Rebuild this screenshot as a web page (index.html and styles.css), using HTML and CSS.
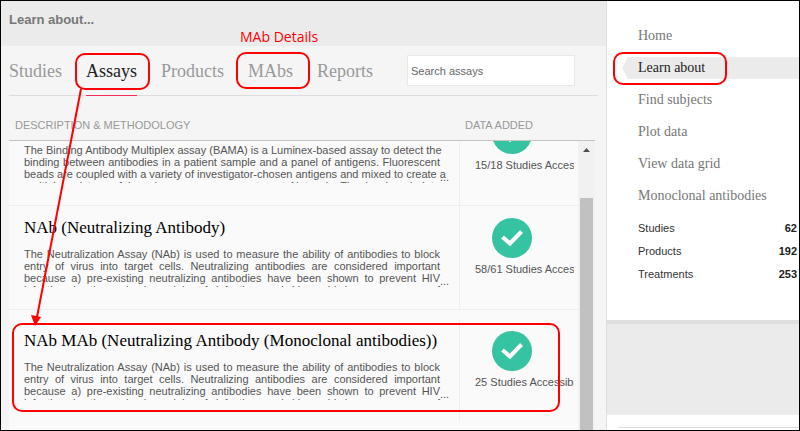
FILE: index.html
```html
<!DOCTYPE html>
<html lang="en">
<head>
    <meta charset="utf-8">
    <meta name="viewport" content="width=device-width, initial-scale=1">
    <title>Learn about - Assays</title>
    <link rel="stylesheet" href="styles.css">
</head>
<body>
    <div class="page">
        <main class="main">
            <header class="header">
                <h1>Learn about...</h1>
            </header>
            <div class="tabbar">
                <nav class="tabs">
                    <a href="#studies">Studies</a>
                    <a href="#assays" class="active">Assays</a>
                    <a href="#products">Products</a>
                    <a href="#mabs">MAbs</a>
                    <a href="#reports">Reports</a>
                </nav>
                <input class="search" type="text" placeholder="Search assays" aria-label="Search assays">
            </div>
            <div class="listing">
                <table class="assays">
                    <thead>
                        <tr>
                            <th>DESCRIPTION &amp; METHODOLOGY</th>
                            <th>DATA ADDED</th>
                        </tr>
                    </thead>
                    <tbody>
                        <tr class="scrolled">
                            <td class="info">
                                <div class="desc">
                                    <p>The Binding Antibody Multiplex assay (BAMA) is a Luminex-based assay to detect the<br>
                                    binding between antibodies in a patient sample and a panel of antigens. Fluorescent<br>
                                    beads are coupled with a variety of investigator-chosen antigens and mixed to create a<br>
                                    multiplex picture of how immune responses target Network. The level and data</p>
                                    <span>...</span>
                                </div>
                            </td>
                            <td class="data">
                                <svg class="check" viewBox="0 0 40 40"><circle cx="20" cy="20" r="20"/><path d="M10.500 19l7.500 6.500 11.500-12"/></svg>
                                <div class="count">15/18 Studies Accessible</div>
                            </td>
                        </tr>
                        <tr>
                            <td class="info">
                                <h2>NAb (Neutralizing Antibody)</h2>
                                <div class="desc">
                                    <p>The Neutralization Assay (NAb) is used to measure the ability of antibodies to block<br>
                                    entry of virus into target cells. Neutralizing antibodies are considered important<br>
                                    because a) pre-existing neutralizing antibodies have been shown to prevent HIV<br>
                                    infection in the animal models of infection and b) could be a measure of</p>
                                    <span>...</span>
                                </div>
                            </td>
                            <td class="data">
                                <svg class="check" viewBox="0 0 40 40"><circle cx="20" cy="20" r="20"/><path d="M10.500 19l7.500 6.500 11.500-12"/></svg>
                                <div class="count">58/61 Studies Accessible</div>
                            </td>
                        </tr>
                        <tr class="last">
                            <td class="info">
                                <h2>NAb MAb (Neutralizing Antibody (Monoclonal antibodies))</h2>
                                <div class="desc">
                                    <p>The Neutralization Assay (NAb) is used to measure the ability of antibodies to block<br>
                                    entry of virus into target cells. Neutralizing antibodies are considered important<br>
                                    because a) pre-existing neutralizing antibodies have been shown to prevent HIV<br>
                                    infection in the animal models of infection and b) could be a measure of</p>
                                    <span>...</span>
                                </div>
                            </td>
                            <td class="data">
                                <svg class="check" viewBox="0 0 40 40"><circle cx="20" cy="20" r="20"/><path d="M10.500 19l7.500 6.500 11.500-12"/></svg>
                                <div class="count">25 Studies Accessible</div>
                            </td>
                        </tr>
                    </tbody>
                </table>
                <div class="scrollbar">
                    <svg viewBox="0 0 7 4"><path d="M0 4L3.500 0 7 4z"/></svg>
                    <div class="thumb"></div>
                </div>
            </div>
        </main>

        <aside class="sidebar">
            <nav class="menu">
                <a href="#home">Home</a>
                <a href="#learn" class="active">Learn about</a>
                <a href="#subjects">Find subjects</a>
                <a href="#plot">Plot data</a>
                <a href="#grid">View data grid</a>
                <a href="#monoclonal">Monoclonal antibodies</a>
            </nav>
            <dl class="stats">
                <div><dt>Studies</dt><dd>62</dd></div>
                <div><dt>Products</dt><dd>192</dd></div>
                <div><dt>Treatments</dt><dd>253</dd></div>
            </dl>
            <div class="band"></div>
            <div class="rule"></div>
        </aside>
    </div>

    <!-- callouts drawn over the page -->
    <svg class="callouts" width="800" height="431">
        <rect x="76" y="54" width="73" height="35" rx="9"/>
        <rect x="237" y="53" width="72" height="35" rx="9"/>
        <rect x="614" y="53" width="112" height="31" rx="9"/>
        <rect x="13" y="324" width="546" height="87" rx="9"/>
        <path d="M81 89L37 317"/>
        <path class="tip" d="M31 315l10 2-6 9z"/>
        <text x="240" y="42">MAb Details</text>
    </svg>
</body>
</html>
```
FILE: styles.css
```css
* {
    box-sizing: border-box;
    margin: 0;
    padding: 0;
}
body {
    position: relative;
    font-family: "Liberation Sans", Arial, sans-serif;
    font-size: 11px;
    color: #555;
}
a {
    text-decoration: none;
}
.page {
    display: flex;
    height: 100vh;
    border: 1px solid #000;
    overflow: hidden;
}

/* main panel */
.main {
    flex: 1;
    min-width: 0;
    display: flex;
    flex-direction: column;
    background: #f5f5f5;
}
.header {
    padding: 10px 8px;
    height: 45px;
    background: #ebebeb;
}
h1 {
    font-size: 13px;
    line-height: 18px;
    color: #777;
}
.tabbar {
    display: flex;
    align-items: center;
    justify-content: space-between;
    height: 50px;
    margin: 0 8px;
    padding-right: 23px;
    border-bottom: 1px solid #ddd;
}
.tabs {
    display: flex;
    gap: 24px;
    font-family: "Liberation Serif", Georgia, serif;
    font-size: 18px;
    line-height: 50px;
}
.tabs a {
    height: 50px;
    color: #999;
}
.tabs .active {
    color: #222;
    border-bottom: 1px solid #f0305a;
}
.search {
    width: 168px;
    height: 31px;
    padding: 0 3px;
    border: 1px solid #e8e8e8;
    background: #fff;
    font: 11px "Liberation Sans", Arial, sans-serif;
}
.search::placeholder {
    color: #666;
}

/* assay list */
.listing {
    flex: 1;
    min-height: 0;
    display: flex;
    margin: 0 11px 0 8px;
}
.assays {
    flex: 1;
    min-width: 0;
    display: flex;
    flex-direction: column;
}
/* header rule runs on above the scrollbar */
.assays thead {
    display: block;
    margin-right: -17px;
    padding-right: 17px;
    border-bottom: 1px solid #c4c4c4;
}
.assays tbody {
    display: block;
    flex: 1;
    min-height: 0;
    overflow: hidden;
    background: #fafafa;
}
.assays tr {
    display: grid;
    grid-template-columns: 1fr 119px;
}
.assays th {
    padding: 22px 6px 7px;
    font-weight: normal;
    line-height: 15px;
    text-align: left;
    color: #999;
}
.assays tbody tr {
    height: 104px;
    border-bottom: 1px solid #eee;
}
.assays .scrolled {
    margin-top: -39px;
}
.assays .last {
    height: 140px;
    padding-top: 9px;
}
.info {
    display: flex;
    flex-direction: column;
    justify-content: flex-end;
    height: 103px;
    padding: 0 0 22px 15px;
}
.info h2 {
    margin-bottom: 9px;
    font-family: "Liberation Serif", Georgia, serif;
    font-size: 17px;
    font-weight: normal;
    line-height: 22px;
    color: #000;
}
.desc {
    display: flex;
    align-items: flex-end;
    line-height: 12px;
}
.desc p {
    width: 416px;
    height: 39px;
    overflow-x: visible;
    overflow-y: clip;
    white-space: nowrap;
    text-align: justify;
    text-align-last: justify;
}
.data {
    height: 103px;
    padding: 12px 4px 0 15px;
    border-left: 1px solid #eee;
}
.check {
    display: block;
    width: 40px;
    height: 40px;
    margin: 0 0 4px 17px;
    fill: #36c3a1;
}
.check path {
    fill: none;
    stroke: #fff;
    stroke-width: 4;
}
.count {
    overflow: hidden;
    white-space: nowrap;
    line-height: 15px;
}
.scrollbar {
    width: 17px;
    margin-top: 45px;
    padding: 7px 2px 0;
    display: flex;
    flex-direction: column;
    background: #f1f1f1;
}
.scrollbar svg {
    width: 7px;
    height: 4px;
    margin: 0 auto 46px 3px;
    fill: #505050;
}
.thumb {
    flex: 1;
    background: #c1c1c1;
}

/* right sidebar */
.sidebar {
    width: 193px;
    display: flex;
    flex-direction: column;
    border-left: 1px solid #ddd;
    background: #fff;
}
.menu {
    display: flex;
    flex-direction: column;
    gap: 10px;
    padding: 24px 0 0 15px;
    font-family: "Liberation Serif", Georgia, serif;
    font-size: 14px;
    line-height: 22px;
}
.menu a {
    padding-left: 16px;
    color: #777;
}
.menu .active {
    color: #222;
    background: #ebebeb;
    clip-path: polygon(6px 0, 100% 0, 100% 100%, 6px 100%, 0 50%);
}
.stats {
    padding: 10px 2px 0 31px;
    line-height: 23px;
    color: #333;
}
.stats div {
    display: flex;
    justify-content: space-between;
}
.stats dd {
    font-weight: bold;
    color: #222;
}
.band {
    flex: 1;
    margin-top: 34px;
    border-top: 4px solid #dfdfdf;
    background: #ebebeb;
}
.rule {
    height: 3px;
    margin: 12px 0 0 11px;
    border-top: 1px solid #ddd;
}

/* callouts */
.callouts {
    position: absolute;
    top: 0;
    left: 0;
    fill: none;
    stroke: #f00;
    stroke-width: 2;
    pointer-events: none;
}
.callouts .tip {
    fill: #f00;
    stroke: none;
}
.callouts text {
    fill: #f00;
    stroke: none;
    font: 14px "Open Sans", "Noto Sans", sans-serif;
}
```
